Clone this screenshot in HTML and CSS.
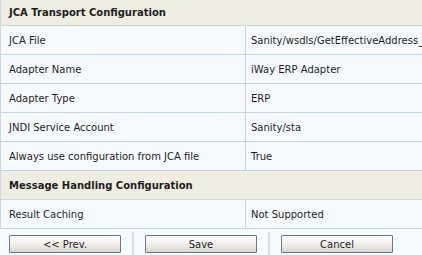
FILE: index.html
```html
<!DOCTYPE html>
<html>
<head>
<meta charset="utf-8">
<link rel="stylesheet" href="styles.css">
</head>
<body>
<div class="page">
  <table class="props">
    <colgroup><col class="c-label"><col class="c-value"></colgroup>
    <tr class="section first"><th colspan="2">JCA Transport Configuration</th></tr>
    <tr><td>JCA File</td><td>Sanity/wsdls/GetEffectiveAddress_Request.wsdl</td></tr>
    <tr><td>Adapter Name</td><td>iWay ERP Adapter</td></tr>
    <tr><td>Adapter Type</td><td>ERP</td></tr>
    <tr><td>JNDI Service Account</td><td>Sanity/sta</td></tr>
    <tr><td>Always use configuration from JCA file</td><td>True</td></tr>
    <tr class="section"><th colspan="2">Message Handling Configuration</th></tr>
    <tr><td>Result Caching</td><td>Not Supported</td></tr>
  </table>
  <div class="actions">
    <button class="btn">&lt;&lt; Prev.</button>
    <span class="sep"></span>
    <button class="btn">Save</button>
    <span class="sep"></span>
    <button class="btn">Cancel</button>
  </div>
</div>
</body>
</html>
```

FILE: styles.css
```css
html, body {
  margin: 0;
  padding: 0;
  background: #f8fbfd;
}
.page {
  width: 422px;
  height: 255px;
  overflow: hidden;
  font-family: "DejaVu Sans", Verdana, sans-serif;
  font-size: 10px;
  color: #1e1e1e;
}
.props {
  border-collapse: collapse;
  width: 520px;
  table-layout: fixed;
  border-left: 1px solid #cbd6e2;
}
.c-label { width: 245px; }
.c-value { width: 275px; }
.props td, .props th {
  height: 28px;
  padding: 0 0 0 8px;
  border-bottom: 1px solid #c3d3e4;
  white-space: nowrap;
  overflow: hidden;
  text-align: left;
  vertical-align: middle;
}
.props td {
  background: #f6fafd;
}
.props td + td {
  border-left: 1px solid #c3d3e4;
  padding-left: 5px;
}
.props th {
  background: #eeede1;
  font-weight: bold;
  border-bottom-color: #d6d8d4;
}
.props tr.first th {
  height: 25px;
}
.actions {
  display: flex;
  align-items: center;
  padding: 3px 0 0 9px;
  gap: 11px;
}
.btn {
  width: 112px;
  height: 18px;
  padding: 0;
  font-family: "DejaVu Sans", Verdana, sans-serif;
  font-size: 10px;
  color: #1e1e1e;
  border: 1px solid #6d7590;
  border-radius: 1px;
  background: linear-gradient(#ffffff, #f3f2ee 45%, #d8d5cd);
}
.sep {
  width: 2px;
  height: 24px;
  background: #d5dce6;
}
```
